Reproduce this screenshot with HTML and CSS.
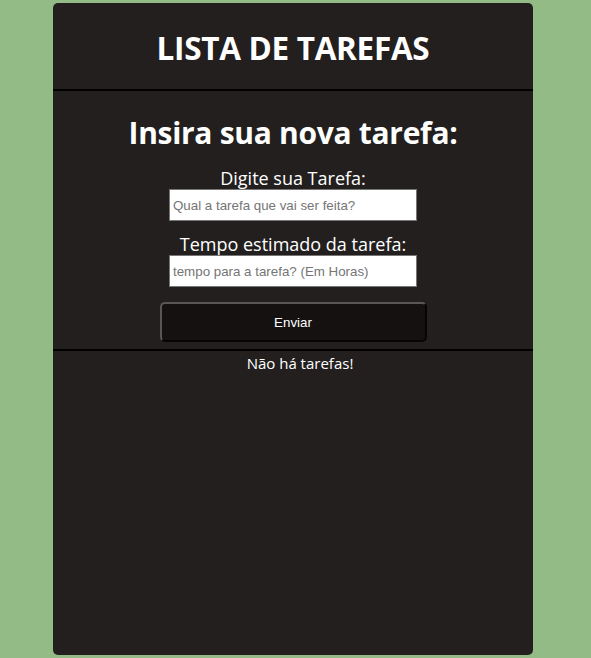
FILE: index.html
```html
<!DOCTYPE html>
<html lang="pt-BR">
<head>
<meta charset="utf-8">
<title>Lista de Tarefas</title>
<link rel="stylesheet" href="styles.css">
</head>
<body>
<main class="card">
  <header class="card-header">
    <h1 class="title">LISTA DE TAREFAS</h1>
  </header>
  <section class="form-section">
    <h2 class="form-title">Insira sua nova tarefa:</h2>
    <form class="task-form">
      <label class="field">
        <span class="field-label">Digite sua Tarefa:</span>
        <input class="field-input" type="text" placeholder="Qual a tarefa que vai ser feita?">
      </label>
      <label class="field">
        <span class="field-label">Tempo estimado da tarefa:</span>
        <input class="field-input" type="text" placeholder="tempo para a tarefa? (Em Horas)">
      </label>
      <button class="submit" type="button">Enviar</button>
    </form>
  </section>
  <section class="tasks">
    <p class="empty">Não há tarefas!</p>
  </section>
</main>
</body>
</html>
```

FILE: styles.css
```css
html, body {
  margin: 0;
  padding: 0;
}
body {
  background: #93bb86;
  font-family: "Open Sans", "Noto Sans", sans-serif;
  color: #ffffff;
  min-height: 658px;
}
.card {
  box-sizing: border-box;
  width: 480px;
  height: 652px;
  margin: 3px 0 0 53px;
  background: #231f1f;
  border-radius: 5px;
  display: flex;
  flex-direction: column;
}
.card-header {
  box-sizing: border-box;
  height: 88px;
  padding-top: 4px;
  border-bottom: 2px solid #000;
  display: flex;
  align-items: center;
  justify-content: center;
}
.title {
  margin: 0;
  font-size: 31.5px;
  font-weight: 700;
  line-height: 40px;
  letter-spacing: -0.3px;
}
.form-section {
  border-bottom: 2px solid #000;
  display: flex;
  flex-direction: column;
  align-items: center;
  padding: 22px 0 7px;
}
.form-title {
  margin: 0;
  font-size: 30px;
  font-weight: 700;
  line-height: 40px;
  letter-spacing: -0.3px;
}
.task-form {
  display: flex;
  flex-direction: column;
  align-items: center;
  margin-top: 14px;
}
.field {
  display: flex;
  flex-direction: column;
  align-items: center;
  margin-bottom: 12px;
}
.field-label {
  font-size: 18px;
  line-height: 22px;
}
.field-input {
  box-sizing: border-box;
  width: 248px;
  height: 32px;
  margin: 0;
  padding: 0 3px;
  border: 1px solid #767676;
  background: #fff;
  font-family: "Liberation Sans", Arial, sans-serif;
  font-size: 13.33px;
  color: #000;
}
.field-input::placeholder {
  color: #757575;
}
.submit {
  box-sizing: border-box;
  width: 267px;
  height: 40px;
  margin-top: 3px;
  background: #151111;
  color: #fff;
  border: 2px outset #5a5656;
  border-radius: 5px;
  font-family: "Liberation Sans", Arial, sans-serif;
  font-size: 13.33px;
}
.tasks {
  display: flex;
  justify-content: center;
  padding-left: 14px;
}
.empty {
  margin: 2px 0 0;
  font-size: 15px;
  line-height: 20px;
}
```
